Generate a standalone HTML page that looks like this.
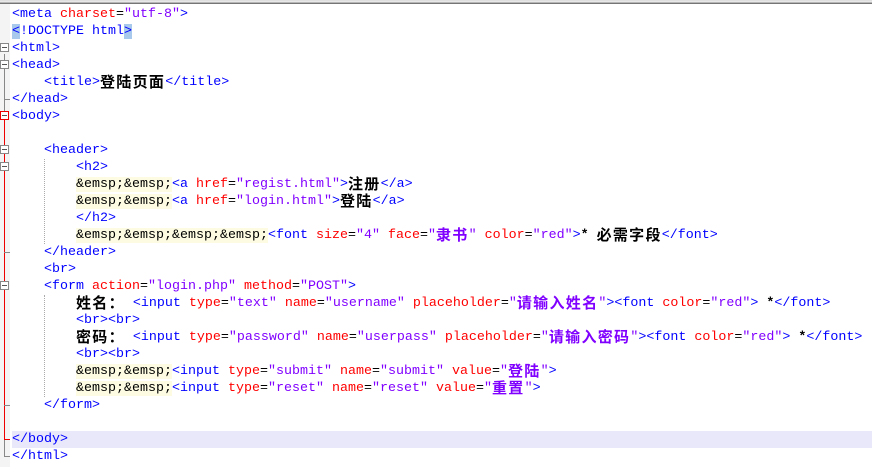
<!DOCTYPE html>
<html><head><meta charset="utf-8"><style>
body{margin:0;width:872px;height:467px;background:#fff;position:relative;overflow:hidden;font-family:"Liberation Mono","Courier New",monospace;font-size:13.33px}
.top{position:absolute;left:0;top:0;width:872px;height:4px;background:linear-gradient(#d8d8d8,#f0f0f0 40%,#555)}
.mg{position:absolute;left:0;top:4px;width:10px;height:463px;background:#f4f4f4}
.l{position:absolute;left:12px;height:17px;line-height:17px;white-space:pre;color:#000;overflow:visible}
.t{color:#0000ff}.a{color:#ff0000}.s{color:#8000ff}
.e{background:#fdfce2}
.c{font-family:"Noto Sans CJK SC",sans-serif;font-weight:bold;font-size:15px;letter-spacing:1.3px;display:inline-block;height:17px;line-height:15px;vertical-align:top;overflow:hidden}
.b{font-weight:bold}
.hl{background:#a8c8ec}
.box{position:absolute;left:0;width:9px;height:9px;border:1px solid #888;background:#fff;box-sizing:border-box}
.box::after{content:"";position:absolute;left:1px;right:1px;top:3px;height:1px;background:#555}
.vl{position:absolute;width:1px}
.tk{position:absolute;left:4px;width:6px;height:1px}
.g{position:absolute;width:0;border-left:1px dotted #aaa}
</style></head><body>
<div class="top"></div>
<div class="mg"></div>
<div style="position:absolute;left:12px;top:431px;width:860px;height:17px;background:#e8e8fa"></div>
<div class="vl" style="left:4px;top:54px;height:60px;background:#888"></div>
<div class="vl" style="left:4px;top:116px;height:323px;background:#e00"></div>
<div class="vl" style="left:4px;top:440px;height:16px;background:#888"></div>
<div class="tk" style="top:99px;background:#888"></div>
<div class="tk" style="top:252px;background:#888"></div>
<div class="tk" style="top:405px;background:#888"></div>
<div class="tk" style="top:439px;background:#e00"></div>
<div class="tk" style="top:456px;background:#888"></div>
<div class="box" style="top:43px"></div>
<div class="box" style="top:60px"></div>
<div class="box" style="top:111px;border-color:#e00"></div>
<div class="box" style="top:145px"></div>
<div class="box" style="top:162px"></div>
<div class="box" style="top:281px"></div>
<div class="g" style="left:44px;top:159px;height:85px"></div>
<div class="g" style="left:44px;top:295px;height:102px"></div>

<div class="l" style="top:6px"><span class="t">&lt;meta</span> <span class="a">charset</span>=<span class="s">"utf-8"</span><span class="t">&gt;</span></div>
<div class="l" style="top:23px"><span class="t hl">&lt;</span><span class="t">!DOCTYPE html</span><span class="t hl">&gt;</span></div>
<div class="l" style="top:40px"><span class="t">&lt;html&gt;</span></div>
<div class="l" style="top:57px"><span class="t">&lt;head&gt;</span></div>
<div class="l" style="top:74px">    <span class="t">&lt;title&gt;</span><span class="c">登陆页面</span><span class="t">&lt;/title&gt;</span></div>
<div class="l" style="top:91px"><span class="t">&lt;/head&gt;</span></div>
<div class="l" style="top:108px"><span class="t">&lt;body&gt;</span></div>
<div class="l" style="top:142px">    <span class="t">&lt;header&gt;</span></div>
<div class="l" style="top:159px">        <span class="t">&lt;h2&gt;</span></div>
<div class="l" style="top:176px">        <span class="e">&amp;emsp;&amp;emsp;</span><span class="t">&lt;a</span> <span class="a">href</span>=<span class="s">"regist.html"</span><span class="t">&gt;</span><span class="c">注册</span><span class="t">&lt;/a&gt;</span></div>
<div class="l" style="top:193px">        <span class="e">&amp;emsp;&amp;emsp;</span><span class="t">&lt;a</span> <span class="a">href</span>=<span class="s">"login.html"</span><span class="t">&gt;</span><span class="c">登陆</span><span class="t">&lt;/a&gt;</span></div>
<div class="l" style="top:210px">        <span class="t">&lt;/h2&gt;</span></div>
<div class="l" style="top:227px">        <span class="e">&amp;emsp;&amp;emsp;&amp;emsp;&amp;emsp;</span><span class="t">&lt;font</span> <span class="a">size</span>=<span class="s">"4"</span> <span class="a">face</span>=<span class="s">"<span class="c">隶书</span>"</span> <span class="a">color</span>=<span class="s">"red"</span><span class="t">&gt;</span><span class="b">*</span> <span class="c">必需字段</span><span class="t">&lt;/font&gt;</span></div>
<div class="l" style="top:244px">    <span class="t">&lt;/header&gt;</span></div>
<div class="l" style="top:261px">    <span class="t">&lt;br&gt;</span></div>
<div class="l" style="top:278px">    <span class="t">&lt;form</span> <span class="a">action</span>=<span class="s">"login.php"</span> <span class="a">method</span>=<span class="s">"POST"</span><span class="t">&gt;</span></div>
<div class="l" style="top:295px">        <span class="c">姓名：</span> <span class="t">&lt;input</span> <span class="a">type</span>=<span class="s">"text"</span> <span class="a">name</span>=<span class="s">"username"</span> <span class="a">placeholder</span>=<span class="s">"<span class="c">请输入姓名</span>"</span><span class="t">&gt;&lt;font</span> <span class="a">color</span>=<span class="s">"red"</span><span class="t">&gt;</span> <span class="b">*</span><span class="t">&lt;/font&gt;</span></div>
<div class="l" style="top:312px">        <span class="t">&lt;br&gt;&lt;br&gt;</span></div>
<div class="l" style="top:329px">        <span class="c">密码：</span> <span class="t">&lt;input</span> <span class="a">type</span>=<span class="s">"password"</span> <span class="a">name</span>=<span class="s">"userpass"</span> <span class="a">placeholder</span>=<span class="s">"<span class="c">请输入密码</span>"</span><span class="t">&gt;&lt;font</span> <span class="a">color</span>=<span class="s">"red"</span><span class="t">&gt;</span> <span class="b">*</span><span class="t">&lt;/font&gt;</span></div>
<div class="l" style="top:346px">        <span class="t">&lt;br&gt;&lt;br&gt;</span></div>
<div class="l" style="top:363px">        <span class="e">&amp;emsp;&amp;emsp;</span><span class="t">&lt;input</span> <span class="a">type</span>=<span class="s">"submit"</span> <span class="a">name</span>=<span class="s">"submit"</span> <span class="a">value</span>=<span class="s">"<span class="c">登陆</span>"</span><span class="t">&gt;</span></div>
<div class="l" style="top:380px">        <span class="e">&amp;emsp;&amp;emsp;</span><span class="t">&lt;input</span> <span class="a">type</span>=<span class="s">"reset"</span> <span class="a">name</span>=<span class="s">"reset"</span> <span class="a">value</span>=<span class="s">"<span class="c">重置</span>"</span><span class="t">&gt;</span></div>
<div class="l" style="top:397px">    <span class="t">&lt;/form&gt;</span></div>
<div class="l" style="top:431px"><span class="t">&lt;/body&gt;</span></div>
<div class="l" style="top:448px"><span class="t">&lt;/html&gt;</span></div>
</body></html>
